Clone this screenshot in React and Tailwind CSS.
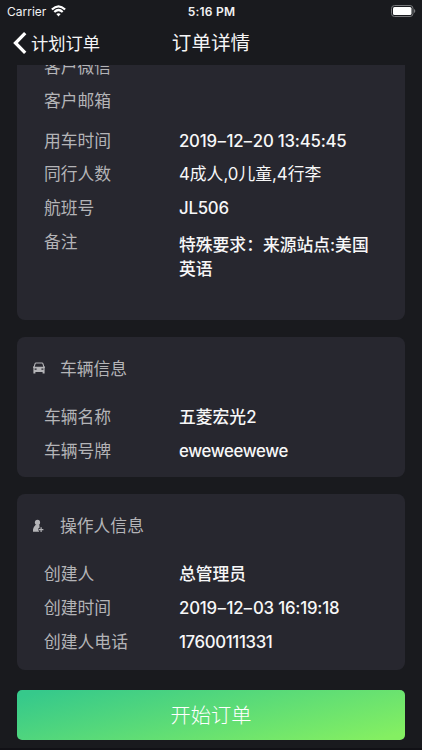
import { Fragment } from "react";

const latin = "font-['Inter','Noto_Sans_CJK_SC',sans-serif]";

function Dashed({ text }) {
  return text.split("-").map((part, i) => (
    <Fragment key={i}>
      {i > 0 && <span className="inline-block scale-x-150 px-px">-</span>}
      {part}
    </Fragment>
  ));
}

function Row({ label, value, className = "h-[34px]", valueClass = "font-medium" }) {
  return (
    <div className={`flex items-center ${className}`}>
      <span className="w-[135px] shrink-0 text-[#b4b4b7]">{label}</span>
      {value && (
        <span className={`whitespace-nowrap text-[#f7f7f8] ${valueClass}`}>
          <Dashed text={value} />
        </span>
      )}
    </div>
  );
}

function CardTitle({ icon, children }) {
  return (
    <div className="flex h-[34px] items-center pl-[15px]">
      <span className="w-[28px] shrink-0">{icon}</span>
      <h2 className="text-[#b4b4b7]">{children}</h2>
    </div>
  );
}

function CarIcon() {
  return (
    <svg className="mt-[-2px] block" width="14" height="14" viewBox="0 0 14 14" fill="none">
      <path d="M2.1 6.2 3.1 2.6Q3.3 2 4 2H10Q10.7 2 10.9 2.6L11.9 6.2" stroke="#b4b4b7" strokeWidth="1.1" />
      <path fillRule="evenodd" fill="#b4b4b7" d="M1 5.4h1.2l.4.4h8.8l.4-.4H13v1L12.600 7V12.500h-2v-1.500H3.400V12.500h-2V7L1 6.400ZM2.600 7.500v1.200h2V7.500Zm6.800 0v1.200h2V7.500Z" />
    </svg>
  );
}

function UserAddIcon() {
  return (
    <svg className="block" width="14" height="14" viewBox="0 0 14 14">
      <circle cx="5.500" cy="3.400" r="2.600" fill="#b4b4b7" />
      <path d="M3.500 6H7.300L7.600 8.400 6.300 9.400V11L7.200 12.700H1Q.6 8.600 3.500 6Z" fill="#b4b4b7" />
      <path d="M9.100 8.300v4.600M6.800 10.600h4.600" stroke="#b4b4b7" strokeWidth="1.200" />
    </svg>
  );
}

function StatusBar() {
  return (
    <div className="grid h-[22px] grid-cols-3 items-center pl-[7px] pr-[6px] text-[#f2f2f3]">
      <div className="flex items-center gap-[5px] text-[12px]">
        <span className="leading-4">Carrier</span>
        <svg className="mt-[-2px]" width="15" height="12" viewBox="0 0 15 12" fill="none" stroke="#fff" strokeWidth="2.200">
          <path d="M.9 4.500Q7.500-1.900 14.100 4.500" />
          <path d="M3.300 7Q7.500 3 11.700 7" />
          <path d="M7.500 11.600 5.300 9.100Q7.500 7.200 9.700 9.100Z" fill="#fff" stroke="none" />
        </svg>
      </div>
      <span className="text-center text-[12px] font-semibold tracking-[0.200px]">5:16 PM</span>
      <svg className="-mt-[2px] justify-self-end" width="25" height="12" viewBox="0 0 25 12">
        <rect x=".5" y=".5" width="21.500" height="11" rx="3" fill="none" stroke="#77787b" />
        <rect x="2" y="2" width="18.500" height="8" rx="1.500" fill="#fff" />
        <path d="M23 4v4q1.300-.5 1.300-2T23 4Z" fill="#77787b" />
      </svg>
    </div>
  );
}

export default function App() {
  return (
    <div className={`flex h-[750px] w-[422px] flex-col overflow-hidden bg-[#191a1e] text-[16.800px] leading-6 ${latin}`}>
      <header className="h-[65px] shrink-0 bg-[#191a1e]">
        <StatusBar />
        <nav className="grid h-[42px] grid-cols-[1fr_auto_1fr] items-center text-[#f5f5f6]">
          <div className="flex items-center gap-[4px] pl-[13px]">
            <svg width="14" height="22" viewBox="0 0 14 22" fill="none" stroke="#fff" strokeWidth="3.300">
              <path d="M12.200 1.200 2.500 11l9.700 9.800" />
            </svg>
            <span className="pt-px text-[17.300px]">计划订单</span>
          </div>
          <h1 className="text-[19.600px]">订单详情</h1>
        </nav>
      </header>

      <main className="flex min-h-0 flex-1 flex-col overflow-hidden px-[17px]">
        <section className="-mt-[15px] h-[270px] shrink-0 rounded-[8px] bg-[#27272f] pl-[27px]">
          <Row label="客户微信" />
          <Row label="客户邮箱" />
          <Row label="用车时间" value="2019-12-20 13:45:45" className="mt-[6px] h-[33px]" valueClass="font-medium tracking-[-0.220px]" />
          <Row label="同行人数" value="4成人,0儿童,4行李" valueClass="font-normal" />
          <Row label="航班号" value="JL506" valueClass="font-medium tracking-[-0.220px]" />
          <div className="flex pt-[5px]">
            <span className="w-[135px] shrink-0 text-[#b4b4b7]">备注</span>
            <p className="w-[200px] pt-[3px] font-medium text-[#f7f7f8]">特殊要求：来源站点:美国英语</p>
          </div>
        </section>

        <section className="mt-[17px] h-[140px] shrink-0 rounded-[8px] bg-[#27272f] pt-[15px]">
          <CardTitle icon={<CarIcon />}>车辆信息</CardTitle>
          <div className="mt-[14px] pl-[27px]">
            <Row label="车辆名称" value="五菱宏光2" />
            <Row label="车辆号牌" value="eweweewewe" valueClass="font-medium tracking-[-0.360px]" />
          </div>
        </section>

        <section className="mt-[17px] h-[176px] shrink-0 rounded-[8px] bg-[#27272f] pt-[15px]">
          <CardTitle icon={<UserAddIcon />}>操作人信息</CardTitle>
          <div className="mt-[14px] pl-[27px]">
            <Row label="创建人" value="总管理员" />
            <Row label="创建时间" value="2019-12-03 16:19:18" valueClass="font-medium tracking-[-0.200px]" />
            <Row label="创建人电话" value="17600111331" valueClass="font-medium tracking-[-0.360px]" />
          </div>
        </section>

        <button className="mt-[20px] h-[50px] shrink-0 rounded-[5px] bg-[linear-gradient(166deg,#36c98b_5%,#84ef62_95%)] pt-[2px] text-[20.300px] font-light text-white">
          开始订单
        </button>
      </main>
      <div className="h-[2px] shrink-0 bg-[#111116]" />
    </div>
  );
}
